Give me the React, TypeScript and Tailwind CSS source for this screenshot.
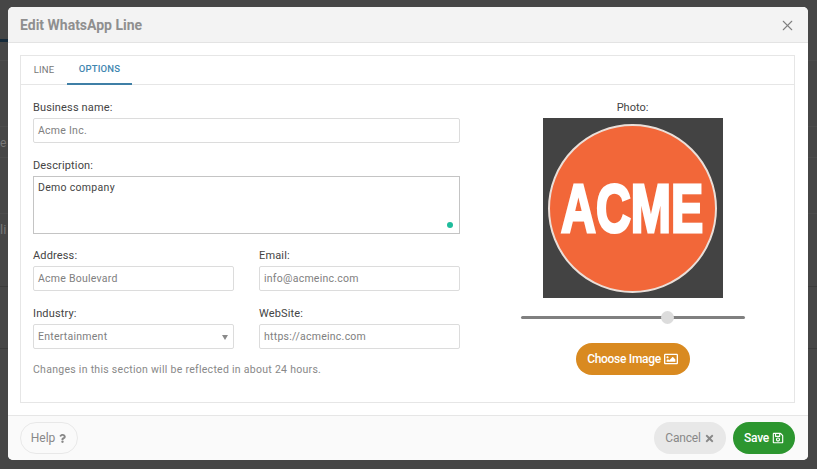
import { X } from 'lucide-react';
import { FaQuestion, FaRegImage, FaRegSave, FaTimes } from 'react-icons/fa';

const inputClass =
	'h-[25px] w-full rounded-[2px] border border-[#dcdcdc] bg-white px-[4px] text-[10.5px] leading-[23px] tracking-[0.25px] text-[#808080]';

const labelClass = 'mb-[3px] h-[15px] text-[11px] leading-[15px] tracking-[0.15px] text-[#444]';

const Field = ({ label, value }: { label: string; value: string }) => (
	<div>
		<div className={labelClass}>{label}</div>
		<div className={inputClass}>{value}</div>
	</div>
);

const AcmeLogo = () => (
	<div className="flex h-[180px] w-[180px] items-center justify-center bg-[#434343]">
		<div className="flex h-[169px] w-[169px] items-center justify-center overflow-hidden rounded-full border-2 border-[#eadfd9] bg-[#f26739]">
			<span className="scale-x-[0.71] text-[68px] leading-none font-bold text-white [font-family:'Liberation_Sans',sans-serif] [-webkit-text-stroke:3px_white]">
				ACME
			</span>
		</div>
	</div>
);

const App = () => {
	return (
		<div className="relative h-[469px] w-[817px] overflow-hidden bg-[#464646] [font-family:Roboto,sans-serif]">
			{/* page behind the backdrop */}
			<div className="absolute top-[39px] left-0 h-[3px] w-[8px] bg-[#152a3a]" />
			<div className="absolute top-[60px] left-0 h-px w-full bg-[#4c4c4c]" />
			<div className="absolute top-[126px] left-0 h-px w-full bg-[#4c4c4c]" />
			<div className="absolute top-[157px] left-0 h-px w-full bg-[#4c4c4c]" />
			<div className="absolute top-[213px] left-0 h-px w-full bg-[#4c4c4c]" />
			<div className="absolute top-[286px] left-0 h-px w-full bg-[#3b3b3b]" />
			<div className="absolute top-[348px] left-0 h-px w-full bg-[#3b3b3b]" />
			<div className="absolute top-[134px] left-0 text-[12px] text-[#777]">e</div>
			<div className="absolute top-[220px] left-0 text-[13px] text-[#777]">li</div>

			{/* Modal */}
			<div className="absolute top-[7px] left-[8px] flex h-[453px] w-[800px] flex-col overflow-hidden rounded-[5px] bg-white">
				<div className="flex h-[36px] items-center justify-between border-b border-[#e3e3e3] bg-[#f3f3f3] pt-[1px] pr-[12px] pl-[12px]">
					<h1 className="text-[14px] font-bold text-[#8f8f8f]">Edit WhatsApp Line</h1>
					<X size={17} strokeWidth={1.5} className="text-[#808080]" />
				</div>

				<div className="flex-1 pt-[12px] pr-[13px] pl-[12px]">
					<div className="h-[348px] border border-[#e6e6e6]">
						{/* Tabs */}
						<div className="flex h-[29px] border-b border-[#e6e6e6]">
							<div className="flex w-[46px] items-center justify-center text-[9.5px] tracking-[0.2px] text-[#777]">
								LINE
							</div>
							<div className="flex h-[29px] w-[65px] items-center justify-center border-b-2 border-[#3f7fa6] text-[9.5px] font-medium tracking-[0.2px] text-[#3f86b0]">
								OPTIONS
							</div>
						</div>

						<div className="flex">
							{/* Form */}
							<div className="w-[439px] shrink-0 pt-[15px] pl-[12px]">
								<Field label="Business name:" value="Acme Inc." />
								<div className="mt-[15px]">
									<div className={labelClass}>Description:</div>
									<div className="relative h-[58px] border border-[#c4c4c4] px-[4px] pt-[3px] text-[10.5px] leading-[16px] tracking-[0.3px] text-[#444]">
										Demo company
										<span className="absolute right-[6px] bottom-[5px] h-[6px] w-[6px] rounded-full bg-[#1fbc9c]" />
									</div>
								</div>
								<div className="mt-[14px] grid grid-cols-[201px_201px] gap-x-[25px] gap-y-[15px]">
									<Field label="Address:" value="Acme Boulevard" />
									<Field label="Email:" value="info@acmeinc.com" />
									<div>
										<div className={labelClass}>Industry:</div>
										<div className={`${inputClass} relative`}>
											Entertainment
											<span className="absolute top-[10px] right-[5px] h-0 w-0 border-x-[3.5px] border-t-[5px] border-x-transparent border-t-[#8a8a8a]" />
										</div>
									</div>
									<Field label="WebSite:" value="https://acmeinc.com" />
								</div>
								<p className="mt-[14px] text-[10.5px] leading-[14px] tracking-[0.28px] text-[#888]">
									Changes in this section will be reflected in about 24 hours.
								</p>
							</div>

							{/* Photo */}
							<div className="flex flex-1 flex-col items-center pt-[16px] pr-[25px] pl-[36px]">
								<div className="mb-[3px] text-[11px] leading-[14px] text-[#444]">Photo:</div>
								<AcmeLogo />
								<div className="relative mt-[18px] h-[3px] w-[224px] shrink-0 rounded-full bg-[#808080]">
									<span className="absolute top-[-5px] left-[140px] h-[13px] w-[13px] rounded-full bg-[#dcdcdc]" />
								</div>
								<button className="mt-[24px] flex h-[32px] w-[114px] shrink-0 items-center justify-center gap-[3px] rounded-full bg-[#d98a20] text-[12px] font-medium tracking-[-0.3px] text-white">
									Choose Image <FaRegImage size={14} />
								</button>
							</div>
						</div>
					</div>
				</div>

				{/* Footer */}
				<div className="flex h-[45px] items-center justify-between border-t border-[#e6e6e6] bg-[#fafafa] pr-[13px] pl-[12px]">
					<button className="flex h-[32px] w-[58px] items-center justify-center gap-[3px] rounded-full border border-[#e8e8e8] text-[12px] text-[#888]">
						Help <FaQuestion size={9} />
					</button>
					<div className="flex gap-[7px]">
						<button className="flex h-[32px] w-[72px] items-center justify-center gap-[3px] rounded-full bg-[#e8e8e8] text-[12px] tracking-[-0.2px] text-[#888]">
							Cancel <FaTimes size={11} />
						</button>
						<button className="flex h-[32px] w-[62px] items-center justify-center gap-[3px] rounded-full bg-[#2c962f] text-[12px] font-medium tracking-[-0.3px] text-white">
							Save <FaRegSave size={12} />
						</button>
					</div>
				</div>
			</div>
		</div>
	);
};

export default App;
